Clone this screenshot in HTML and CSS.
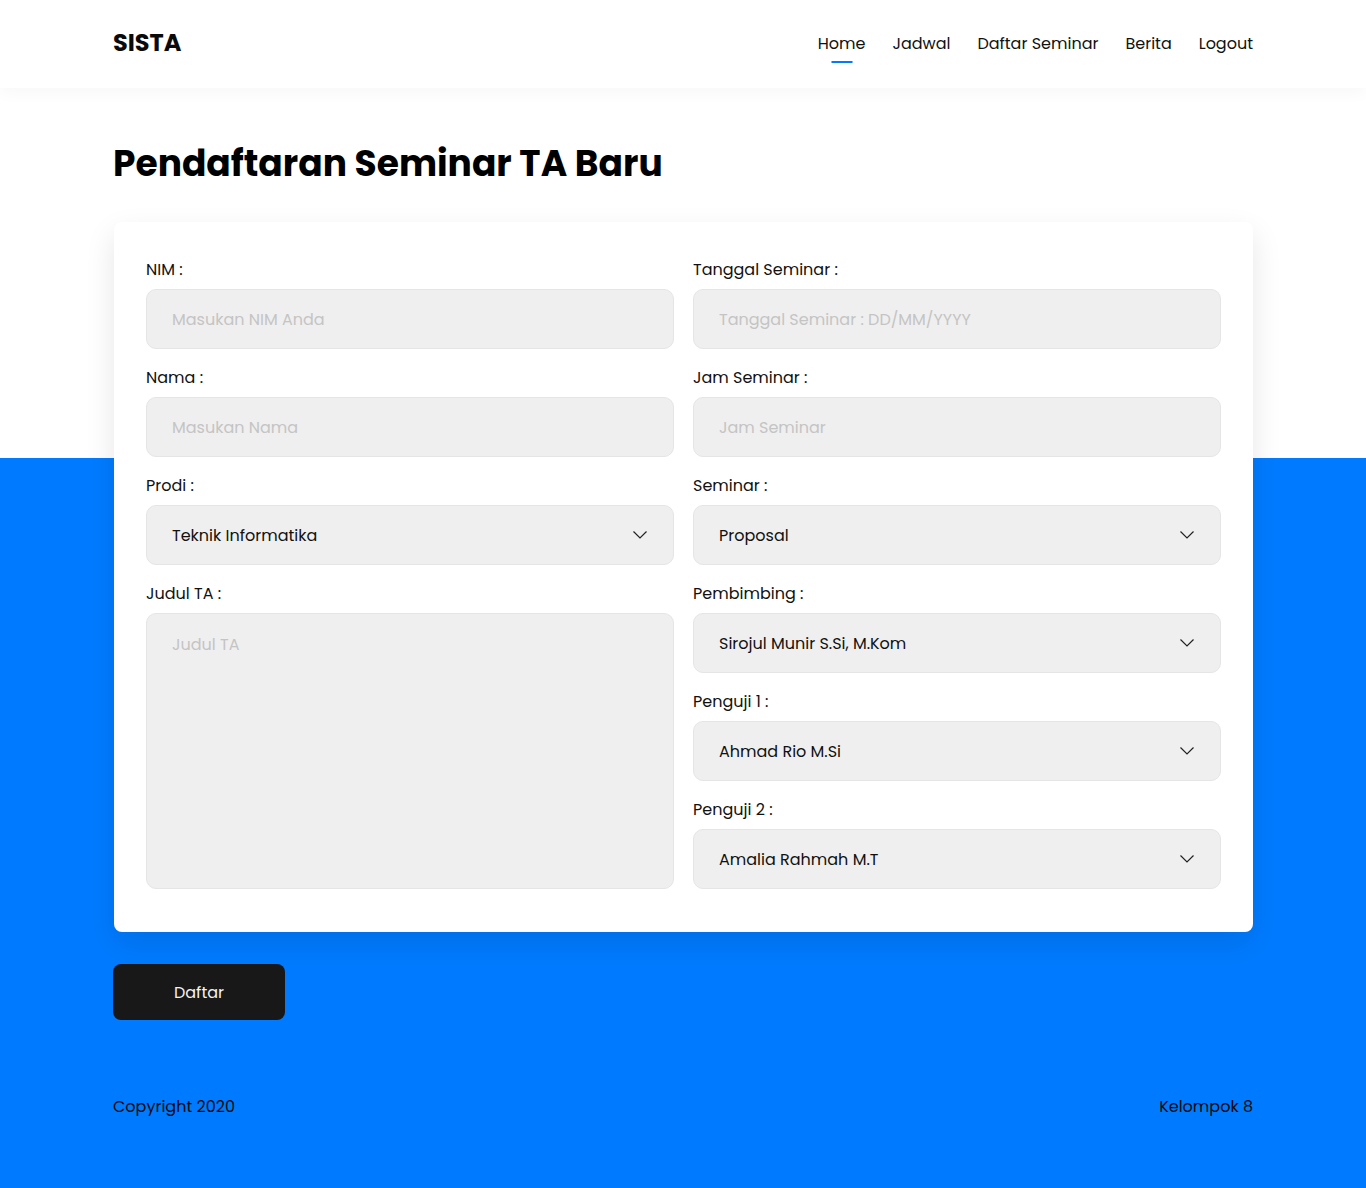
FILE: index.html
```html
<!DOCTYPE html>
<html lang="id">
<head>
<meta charset="utf-8">
<title>SISTA</title>
<link rel="stylesheet" href="styles.css">
</head>
<body>
<header class="topbar">
  <div class="container topbar-inner">
    <div class="logo">SISTA</div>
    <nav class="nav">
      <a class="nav-link active" href="#">Home</a>
      <a class="nav-link" href="#">Jadwal</a>
      <a class="nav-link" href="#">Daftar Seminar</a>
      <a class="nav-link" href="#">Berita</a>
      <a class="nav-link" href="#">Logout</a>
    </nav>
  </div>
</header>
<main class="main">
  <div class="container">
    <h1 class="title">Pendaftaran Seminar TA Baru</h1>
    <form class="card">
      <div class="col">
        <div class="field">
          <label class="label">NIM :</label>
          <input class="input" type="text" placeholder="Masukan NIM Anda">
        </div>
        <div class="field">
          <label class="label">Nama :</label>
          <input class="input" type="text" placeholder="Masukan Nama">
        </div>
        <div class="field">
          <label class="label">Prodi :</label>
          <div class="select"><span>Teknik Informatika</span><svg class="chev" viewBox="0 0 14 8" width="14" height="8"><path d="M0.5 0.5l6.5 6.5 6.5-6.5" fill="none" stroke="#222" stroke-width="1.2"/></svg></div>
        </div>
        <div class="field grow">
          <label class="label">Judul TA :</label>
          <textarea class="input textarea" placeholder="Judul TA"></textarea>
        </div>
      </div>
      <div class="col">
        <div class="field">
          <label class="label">Tanggal Seminar :</label>
          <input class="input" type="text" placeholder="Tanggal Seminar : DD/MM/YYYY">
        </div>
        <div class="field">
          <label class="label">Jam Seminar :</label>
          <input class="input" type="text" placeholder="Jam Seminar">
        </div>
        <div class="field">
          <label class="label">Seminar :</label>
          <div class="select"><span>Proposal</span><svg class="chev" viewBox="0 0 14 8" width="14" height="8"><path d="M0.5 0.5l6.5 6.5 6.5-6.5" fill="none" stroke="#222" stroke-width="1.2"/></svg></div>
        </div>
        <div class="field">
          <label class="label">Pembimbing :</label>
          <div class="select"><span>Sirojul Munir S.Si, M.Kom</span><svg class="chev" viewBox="0 0 14 8" width="14" height="8"><path d="M0.5 0.5l6.5 6.5 6.5-6.5" fill="none" stroke="#222" stroke-width="1.2"/></svg></div>
        </div>
        <div class="field">
          <label class="label">Penguji 1 :</label>
          <div class="select"><span>Ahmad Rio M.Si</span><svg class="chev" viewBox="0 0 14 8" width="14" height="8"><path d="M0.5 0.5l6.5 6.5 6.5-6.5" fill="none" stroke="#222" stroke-width="1.2"/></svg></div>
        </div>
        <div class="field">
          <label class="label">Penguji 2 :</label>
          <div class="select"><span>Amalia Rahmah M.T</span><svg class="chev" viewBox="0 0 14 8" width="14" height="8"><path d="M0.5 0.5l6.5 6.5 6.5-6.5" fill="none" stroke="#222" stroke-width="1.2"/></svg></div>
        </div>
      </div>
    </form>
    <button class="btn" type="button">Daftar</button>
    <footer class="footer">
      <span>Copyright 2020</span>
      <span>Kelompok 8</span>
    </footer>
  </div>
</main>
</body>
</html>
```

FILE: styles.css
```css
* { box-sizing: border-box; }
html, body { margin: 0; padding: 0; }
body {
  font-family: "Poppins", "Inter", "Noto Sans", sans-serif;
  color: #111;
  background: linear-gradient(to bottom, #ffffff 0, #ffffff 458px, #007bff 458px, #007bff 100%);
  min-height: 1188px;
}
.container { width: 1140px; margin: 0 auto; }
.topbar {
  background: #fff;
  height: 88px;
  box-shadow: 0 4px 16px rgba(0,0,0,0.035);
  position: relative;
  z-index: 1;
}
.topbar-inner {
  height: 88px;
  display: flex;
  align-items: center;
  justify-content: space-between;
}
.logo { font-size: 24px; font-weight: 700; color: #0a0a0a; line-height: 30px; margin-top: -3px; }
.nav { display: flex; gap: 27px; }
.nav-link {
  font-size: 16px;
  color: #111;
  text-decoration: none;
  position: relative;
  line-height: 24px;
}
.nav-link.active::after {
  content: "";
  position: absolute;
  left: 50%;
  transform: translateX(-50%);
  bottom: -7px;
  width: 21px;
  height: 2px;
  background: #007bff;
}
.main { padding-top: 53px; }
.title {
  margin: 0;
  font-size: 36px;
  font-weight: 700;
  line-height: 46px;
  color: #000;
}
.card {
  margin: 35px 0 0 1px;
  background: #fff;
  border-radius: 8px;
  box-shadow: 0 12px 30px rgba(0,0,0,0.1);
  padding: 35px 32px 27px;
  display: grid;
  grid-template-columns: 528px 528px;
  column-gap: 19px;
}
.col { display: flex; flex-direction: column; }
.field { display: flex; flex-direction: column; margin-bottom: 16px; }
.field.grow { flex: 1; }
.label { font-size: 16px; line-height: 24px; margin: 1px 0 7px; color: #111; }
.input {
  height: 60px;
  background: #efefef;
  border: 1px solid #e5e5e5;
  border-radius: 10px;
  padding: 0 25px;
  font-family: inherit;
  font-size: 16px;
  color: #111;
  outline: none;
}
.input::placeholder { color: #c4c4c4; }
.textarea { flex: 1; resize: none; padding-top: 18px; height: auto; }
.select {
  height: 60px;
  background: #efefef;
  border: 1px solid #e5e5e5;
  border-radius: 10px;
  padding: 0 25px;
  display: flex;
  align-items: center;
  justify-content: space-between;
  font-size: 16px;
  color: #111;
}
.chev { margin-right: 1px; margin-top: -1px; }
.btn {
  margin-top: 32px;
  width: 172px;
  height: 56px;
  background: #181818;
  color: #f2f2f2;
  border: none;
  border-radius: 8px;
  font-family: inherit;
  font-size: 16px;
}
.footer {
  display: flex;
  justify-content: space-between;
  font-size: 16px;
  line-height: 24px;
  color: #0a0a0a;
  margin-top: 75px;
  padding-bottom: 69px;
}
```
